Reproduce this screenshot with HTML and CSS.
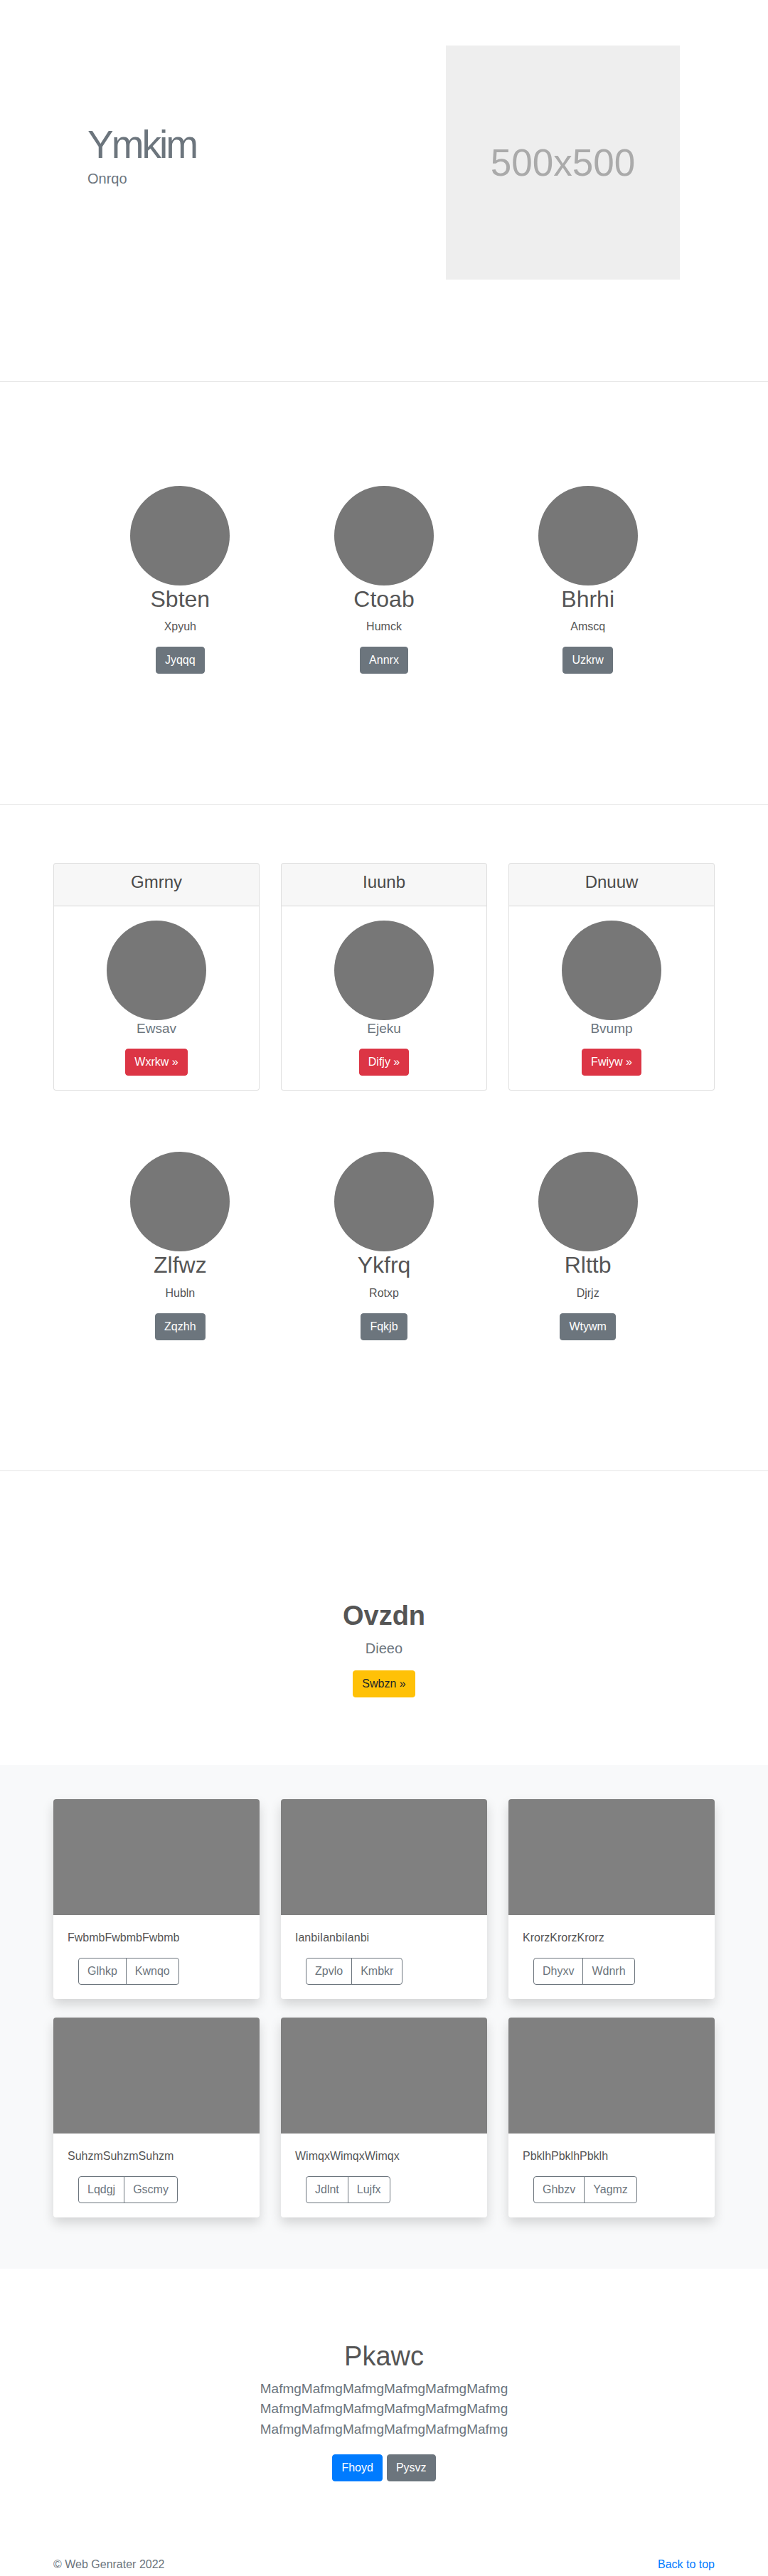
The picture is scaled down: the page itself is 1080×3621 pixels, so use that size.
FILE: index.html
```html
<!DOCTYPE html>
<html lang="en">
<head>
<meta charset="utf-8">
<title>Web Genrater</title>
<link rel="stylesheet" href="styles.css">
</head>
<body>

<section class="hero">
  <div class="hero-inner">
    <div class="hero-text">
      <h1 class="display">Ymkim</h1>
      <p class="hero-sub">Onrqo</p>
    </div>
    <div class="placeholder">500x500</div>
  </div>
</section>

<hr class="divider">

<section class="team team-first">
  <div class="team-row">
    <div class="member">
      <div class="avatar"></div>
      <h2>Sbten</h2>
      <p>Xpyuh</p>
      <a class="btn btn-secondary" href="#">Jyqqq</a>
    </div>
    <div class="member">
      <div class="avatar"></div>
      <h2>Ctoab</h2>
      <p>Humck</p>
      <a class="btn btn-secondary" href="#">Annrx</a>
    </div>
    <div class="member">
      <div class="avatar"></div>
      <h2>Bhrhi</h2>
      <p>Amscq</p>
      <a class="btn btn-secondary" href="#">Uzkrw</a>
    </div>
  </div>
</section>

<hr class="divider">

<section class="pricing">
  <div class="container">
    <div class="card-row">
      <div class="card">
        <div class="card-header"><h4>Gmrny</h4></div>
        <div class="card-body">
          <div class="avatar"></div>
          <p class="card-lead">Ewsav</p>
          <a class="btn btn-danger" href="#">Wxrkw &raquo;</a>
        </div>
      </div>
      <div class="card">
        <div class="card-header"><h4>Iuunb</h4></div>
        <div class="card-body">
          <div class="avatar"></div>
          <p class="card-lead">Ejeku</p>
          <a class="btn btn-danger" href="#">Difjy &raquo;</a>
        </div>
      </div>
      <div class="card">
        <div class="card-header"><h4>Dnuuw</h4></div>
        <div class="card-body">
          <div class="avatar"></div>
          <p class="card-lead">Bvump</p>
          <a class="btn btn-danger" href="#">Fwiyw &raquo;</a>
        </div>
      </div>
    </div>
  </div>
</section>

<section class="team team-second">
  <div class="team-row">
    <div class="member">
      <div class="avatar"></div>
      <h2>Zlfwz</h2>
      <p>Hubln</p>
      <a class="btn btn-secondary" href="#">Zqzhh</a>
    </div>
    <div class="member">
      <div class="avatar"></div>
      <h2>Ykfrq</h2>
      <p>Rotxp</p>
      <a class="btn btn-secondary" href="#">Fqkjb</a>
    </div>
    <div class="member">
      <div class="avatar"></div>
      <h2>Rlttb</h2>
      <p>Djrjz</p>
      <a class="btn btn-secondary" href="#">Wtywm</a>
    </div>
  </div>
</section>

<hr class="divider">

<section class="cta">
  <h1>Ovzdn</h1>
  <p class="lead">Dieeo</p>
  <a class="btn btn-warning" href="#">Swbzn &raquo;</a>
</section>

<section class="album">
  <div class="container">
    <div class="album-grid">
      <div class="album-card">
        <div class="thumb"></div>
        <div class="album-body">
          <p>FwbmbFwbmbFwbmb</p>
          <div class="btn-group">
            <a class="btn btn-outline" href="#">Glhkp</a><a class="btn btn-outline" href="#">Kwnqo</a>
          </div>
        </div>
      </div>
      <div class="album-card">
        <div class="thumb"></div>
        <div class="album-body">
          <p>IanbiIanbiIanbi</p>
          <div class="btn-group">
            <a class="btn btn-outline" href="#">Zpvlo</a><a class="btn btn-outline" href="#">Kmbkr</a>
          </div>
        </div>
      </div>
      <div class="album-card">
        <div class="thumb"></div>
        <div class="album-body">
          <p>KrorzKrorzKrorz</p>
          <div class="btn-group">
            <a class="btn btn-outline" href="#">Dhyxv</a><a class="btn btn-outline" href="#">Wdnrh</a>
          </div>
        </div>
      </div>
      <div class="album-card">
        <div class="thumb"></div>
        <div class="album-body">
          <p>SuhzmSuhzmSuhzm</p>
          <div class="btn-group">
            <a class="btn btn-outline" href="#">Lqdgj</a><a class="btn btn-outline" href="#">Gscmy</a>
          </div>
        </div>
      </div>
      <div class="album-card">
        <div class="thumb"></div>
        <div class="album-body">
          <p>WimqxWimqxWimqx</p>
          <div class="btn-group">
            <a class="btn btn-outline" href="#">Jdlnt</a><a class="btn btn-outline" href="#">Lujfx</a>
          </div>
        </div>
      </div>
      <div class="album-card">
        <div class="thumb"></div>
        <div class="album-body">
          <p>PbklhPbklhPbklh</p>
          <div class="btn-group">
            <a class="btn btn-outline" href="#">Ghbzv</a><a class="btn btn-outline" href="#">Yagmz</a>
          </div>
        </div>
      </div>
    </div>
  </div>
</section>

<section class="jumbo">
  <h1>Pkawc</h1>
  <p class="lead">MafmgMafmgMafmgMafmgMafmgMafmg<br>MafmgMafmgMafmgMafmgMafmgMafmg<br>MafmgMafmgMafmgMafmgMafmgMafmg</p>
  <div class="jumbo-actions">
    <a class="btn btn-primary" href="#">Fhoyd</a>
    <a class="btn btn-secondary" href="#">Pysvz</a>
  </div>
</section>

<footer class="footer">
  <div class="container footer-inner">
    <p>&copy; Web Genrater 2022</p>
    <a href="#">Back to top</a>
  </div>
</footer>

</body>
</html>
```

FILE: styles.css
```css
* { box-sizing: border-box; }

html, body {
  margin: 0;
  padding: 0;
}

body {
  font-family: "Liberation Sans", Arial, sans-serif;
  font-size: 16px;
  line-height: 1.5;
  color: #212529;
  background: #fff;
}

a { text-decoration: none; }

h1, h2, h4, p { margin: 0; }

.container {
  width: 930px;
  margin: 0 auto;
}

/* ---------- hero ---------- */
.hero {
  padding: 64px 0 143px;
}

.hero-inner {
  display: flex;
  align-items: flex-start;
  margin-left: 123px;
}

.hero-text {
  width: 504px;
  padding-top: 106px;
}

.display {
  font-size: 55px;
  font-weight: 300;
  line-height: 1.2;
  color: #6c757d;
  letter-spacing: -3px;
}

.hero-sub {
  font-size: 20px;
  font-weight: 300;
  line-height: 1.5;
  color: #6c757d;
}

.placeholder {
  width: 329px;
  height: 329px;
  background: #eeeeee;
  color: #aaaaaa;
  font-size: 53px;
  display: flex;
  align-items: center;
  justify-content: center;
}

/* ---------- divider ---------- */
.divider {
  margin: 0;
  border: 0;
  border-top: 1px solid #e5e5e5;
}

/* ---------- team ---------- */
.team-first {
  padding: 146px 0 183px;
}

.team-second {
  padding: 86px 0 183px;
}

.team-row {
  width: 860px;
  margin: 0 auto;
  display: grid;
  grid-template-columns: repeat(3, 1fr);
}

.member {
  display: flex;
  flex-direction: column;
  align-items: center;
  text-align: center;
}

.avatar {
  width: 140px;
  height: 140px;
  border-radius: 50%;
  background: #777777;
}

.member h2 {
  font-size: 32px;
  font-weight: 400;
  line-height: 1.2;
  color: #555;
  margin-bottom: 8px;
}

.member p {
  color: #555;
  margin-bottom: 16px;
}

/* ---------- buttons ---------- */
.btn {
  display: inline-block;
  padding: 6px 12px;
  font-size: 16px;
  line-height: 24px;
  border: 1px solid transparent;
  border-radius: 4px;
  text-align: center;
  white-space: nowrap;
}

.btn-secondary { background: #6c757d; border-color: #6c757d; color: #fff; }
.btn-danger { background: #dc3545; border-color: #dc3545; color: #fff; }
.btn-warning { background: #ffc107; border-color: #ffc107; color: #212529; }
.btn-primary { background: #007bff; border-color: #007bff; color: #fff; }
.btn-outline { background: transparent; border-color: #6c757d; color: #6c757d; }

.btn-group {
  display: inline-flex;
  margin-left: 15px;
}

.btn-group .btn:first-child {
  border-top-right-radius: 0;
  border-bottom-right-radius: 0;
}

.btn-group .btn + .btn {
  margin-left: -1px;
  border-top-left-radius: 0;
  border-bottom-left-radius: 0;
}

/* ---------- pricing cards ---------- */
.pricing {
  padding-top: 82px;
}

.card-row {
  display: grid;
  grid-template-columns: repeat(3, 1fr);
  column-gap: 30px;
}

.card {
  border: 1px solid rgba(0, 0, 0, 0.125);
  border-radius: 4px;
  background: #fff;
  text-align: center;
  overflow: hidden;
}

.card-header {
  padding: 12px 20px;
  background: rgba(0, 0, 0, 0.03);
  border-bottom: 1px solid rgba(0, 0, 0, 0.125);
}

.card-header h4 {
  font-size: 24px;
  font-weight: 400;
  line-height: 1.2;
  color: #4a4a4a;
  margin-bottom: 6px;
}

.card-body {
  padding: 20px;
  display: flex;
  flex-direction: column;
  align-items: center;
}

.card-lead {
  font-size: 19px;
  font-weight: 300;
  line-height: 24px;
  color: #6c757d;
  margin-bottom: 16px;
}

/* ---------- cta ---------- */
.cta {
  padding: 181px 0 95px;
  text-align: center;
}

.cta h1 {
  font-size: 38px;
  font-weight: 700;
  line-height: 1.2;
  color: #555;
  margin-bottom: 8px;
}

.lead {
  font-size: 20px;
  font-weight: 300;
  line-height: 1.5;
  color: #6c757d;
  margin-bottom: 16px;
}

/* ---------- album ---------- */
.album {
  background: #f8f9fa;
  padding: 48px 0;
}

.album-grid {
  display: grid;
  grid-template-columns: repeat(3, 1fr);
  gap: 26px 30px;
  padding-bottom: 24px;
}

.album-card {
  background: #fff;
  border-radius: 4px;
  overflow: hidden;
  box-shadow: 0 8px 16px rgba(0, 0, 0, 0.15);
}

.thumb {
  height: 163px;
  background: #808080;
}

.album-body {
  padding: 20px;
}

.album-body p {
  color: #555;
  margin-bottom: 16px;
}

/* ---------- jumbo ---------- */
.jumbo {
  padding: 101px 0 105px;
  text-align: center;
}

.jumbo h1 {
  font-size: 38px;
  font-weight: 300;
  line-height: 1.2;
  color: #555;
  margin-bottom: 8px;
}

.jumbo .lead {
  font-size: 19px;
  margin-bottom: 21px;
}

.jumbo-actions {
  display: flex;
  justify-content: center;
  gap: 6px;
}

/* ---------- footer ---------- */
.footer {
  color: #6c757d;
}

.footer-inner {
  display: flex;
  justify-content: space-between;
}

.footer a { color: #007bff; }
```
